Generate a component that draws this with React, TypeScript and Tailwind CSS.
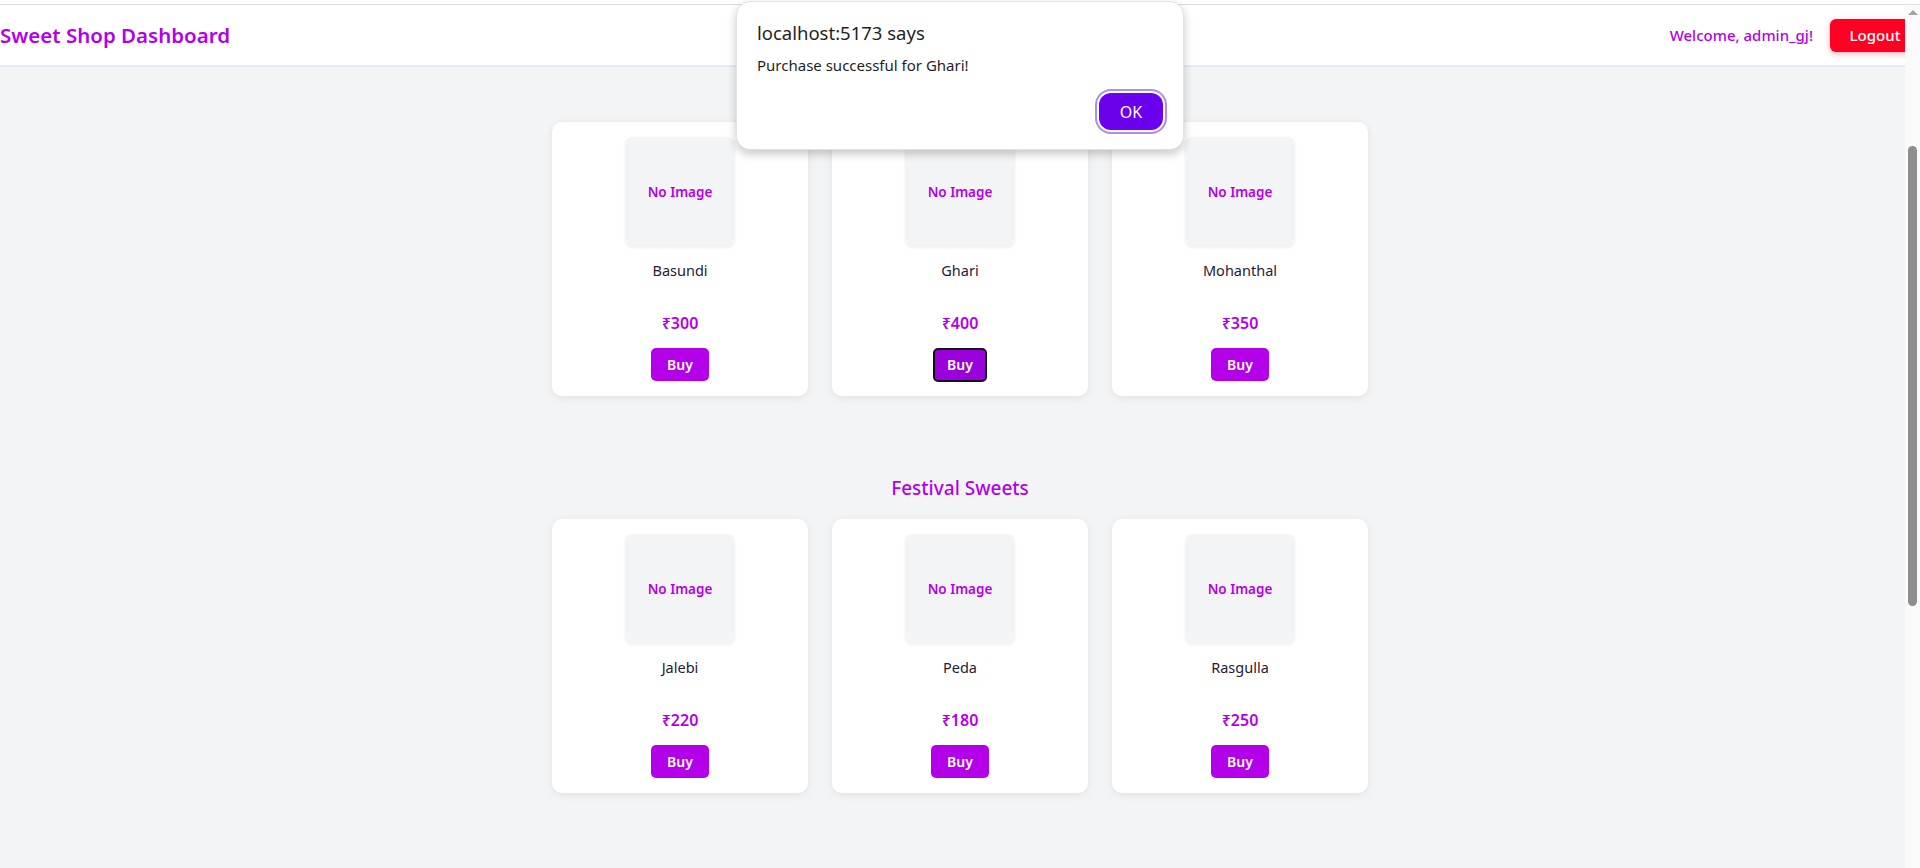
import React from "react";

type Sweet = { name: string; price: number };

const sections: { title: string; items: Sweet[] }[] = [
  {
    title: "Milk Sweets",
    items: [
      { name: "Basundi", price: 300 },
      { name: "Ghari", price: 400 },
      { name: "Mohanthal", price: 350 },
    ],
  },
  {
    title: "Festival Sweets",
    items: [
      { name: "Jalebi", price: 220 },
      { name: "Peda", price: 180 },
      { name: "Rasgulla", price: 250 },
    ],
  },
];

function Card({ s, focused }: { s: Sweet; focused?: boolean }) {
  return (
    <div className="w-[256px] h-[274px] bg-white rounded-[10px] shadow-[0_2px_8px_rgba(0,0,0,0.08)] flex flex-col items-center pt-[15px]">
      <div className="w-[110px] h-[110px] rounded-lg bg-[#f3f4f6] shadow-[0_1px_3px_rgba(0,0,0,0.06)] flex items-center justify-center">
        <span className="text-[13.5px] font-semibold text-[#b400e8]">No Image</span>
      </div>
      <div className="mt-[13px] h-5 leading-5 text-[14.5px] text-[#1f2037]">{s.name}</div>
      <div className="mt-[31px] h-6 leading-6 text-[16px] font-semibold text-[#b400e8]">₹{s.price}</div>
      <button
        className={
          focused
            ? "mt-[13px] w-[50px] h-[30px] rounded-[5px] bg-[#9a00dc] border-2 border-[#111] text-white text-[14px] font-semibold leading-none box-content"
            : "mt-[13px] w-[48px] h-[27px] rounded-[5px] bg-[#b400e8] text-white text-[14px] font-semibold leading-none px-[5px] py-[3px] box-content"
        }
      >
        Buy
      </button>
    </div>
  );
}

export default function App() {
  return (
    <div className="relative w-[1920px] h-[868px] overflow-hidden bg-[#f3f4f6] font-['Noto_Sans',sans-serif]">
      <div className="h-[5px] bg-white border-b border-[#dedede]" />
      <header className="h-[62px] bg-white border-b-2 border-[#e8e8fa] flex items-center justify-between">
        <h1 className="text-[20.5px] font-semibold text-[#b400e8] leading-7">Sweet Shop Dashboard</h1>
        <div className="flex items-center gap-[17px]">
          <span className="text-[15px] font-medium text-[#b400e8]">Welcome, admin_gj!</span>
          <button className="w-[90px] h-[33px] rounded-md bg-[#ff0022] text-white text-[15px] font-medium shadow-[0_2px_6px_rgba(255,0,34,0.3)]">
            Logout
          </button>
        </div>
      </header>
      <main className="flex flex-col items-center pt-[10px]">
        {sections.map((sec, i) => (
          <section key={sec.title} className={i === 0 ? "flex flex-col items-center" : "flex flex-col items-center mt-[78px]"}>
            <h2 className="h-7 leading-7 text-[19px] font-medium text-[#b400e8] mb-[17px]">{sec.title}</h2>
            <div className="flex gap-6">
              {sec.items.map((s) => (
                <Card key={s.name} s={s} focused={s.name === "Ghari"} />
              ))}
            </div>
          </section>
        ))}
      </main>

      {/* alert dialog */}
      <div className="absolute left-[736px] top-[1px] w-[448px] h-[149px] bg-white rounded-[14px] border border-[#e2e2e2] shadow-[0_4px_10px_rgba(0,0,0,0.22)] pt-[19px] px-5 flex flex-col">
        <div className="text-[18.5px] leading-6 text-[#1f1f1f]">localhost:5173 says</div>
        <div className="mt-[10px] text-[15px] leading-5 text-[#1f1f1f]">Purchase successful for Ghari!</div>
        <div className="mt-[18px] flex justify-end">
          <button className="w-[64px] h-[37px] rounded-[12px] bg-[#6a00ee] text-white text-[16px] ring-2 ring-[#a98cf5] ring-offset-2 ring-offset-white">
            OK
          </button>
        </div>
      </div>

      {/* scrollbar */}
      <div className="absolute right-0 top-[5px] bottom-0 w-[15px] bg-[#fafafa] flex flex-col items-center">
        <div className="mt-[5px] w-0 h-0 border-l-[5px] border-r-[5px] border-b-[5px] border-l-transparent border-r-transparent border-b-[#a3a3a3]" />
        <div className="mt-[131px] w-[9px] h-[460px] rounded-full bg-[#8e8e8e]" />
      </div>
    </div>
  );
}
